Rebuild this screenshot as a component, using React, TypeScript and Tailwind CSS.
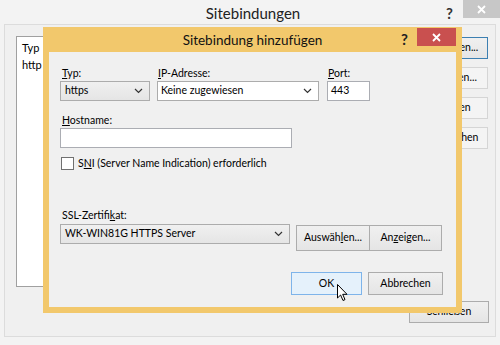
import React from 'react';

const font = "font-['Segoe_UI','Lato','Noto_Sans',sans-serif]";

function Chevron() {
  return (
    <svg width="9" height="6" viewBox="0 0 9 6" className="shrink-0">
      <path d="M1 1 L4.5 4.5 L8 1" fill="none" stroke="#333" strokeWidth="1.2" />
    </svg>
  );
}

function WinButton({ children, className = '' }: { children: React.ReactNode; className?: string }) {
  return (
    <div className={`flex items-center justify-center border border-[#acacac] bg-gradient-to-b from-[#f0f0f0] to-[#e5e5e5] text-[10.5px] text-black ${className}`}>
      {children}
    </div>
  );
}

export default function App() {
  return (
    <div className={`relative w-[500px] h-[345px] overflow-hidden bg-[#f3f3f3] text-black ${font}`}>
      {/* ── Background window: Sitebindungen ── */}
      <div className="flex flex-col h-full">
        <div className="relative h-[24px] shrink-0 flex items-center justify-center">
          <span className="text-[15px] text-[#222] pt-[2px] pl-[6px]">Sitebindungen</span>
          <span className="absolute left-[446px] top-[2px] text-[15px] font-bold text-[#333]">?</span>
          <div className="absolute right-0 top-0 w-[37px] h-[18px] bg-[#c7c7c7] flex items-center justify-center">
            <svg width="9" height="9" viewBox="0 0 9 9">
              <path d="M1 1 L8 8 M8 1 L1 8" stroke="#fff" strokeWidth="1.8" />
            </svg>
          </div>
        </div>
        <div className="mx-[4px] mb-[8px] flex-1 flex flex-col border border-[#dcdcdc] bg-[#f0f0f0] pl-[11px] pr-[7px] pt-[11px]">
          <div className="flex gap-[10px]">
            <div className="flex-1 h-[251px] bg-white border border-[#a0a0a0] text-[11px] pl-[5px] pt-[2px]">
              <div className="h-[17px] leading-[17px]">Typ</div>
              <div className="h-[17px] leading-[17px]">http</div>
            </div>
            <div className="w-[80px] flex flex-col gap-[8px] pt-[1px]">
              <WinButton className="h-[22px] !border-[#3c7fb1]">Hinzufügen...</WinButton>
              <WinButton className="h-[22px] text-[#a0a0a0] !border-[#d5d5d5] !from-[#f4f4f4] !to-[#f4f4f4]">Bearbeiten...</WinButton>
              <WinButton className="h-[22px] text-[#a0a0a0] !border-[#d5d5d5] !from-[#f4f4f4] !to-[#f4f4f4]">Entfernen</WinButton>
              <WinButton className="h-[22px] text-[#a0a0a0] !border-[#d5d5d5] !from-[#f4f4f4] !to-[#f4f4f4]">Durchsuchen</WinButton>
            </div>
          </div>
          <div className="flex justify-end mt-[14px]">
            <WinButton className="w-[80px] h-[22px] mr-[-1px]">Schließen</WinButton>
          </div>
        </div>
      </div>

      {/* ── Dialog: Sitebindung hinzufügen ── */}
      <div className="absolute left-[43px] top-[27px] w-[419px] h-[286px] bg-[#f2c86c] flex flex-col px-[6px] pb-[6px]">
        <div className="relative h-[25px] shrink-0 flex items-center justify-center">
          <span className="text-[13.5px] text-[#111] pt-[1px]">Sitebindung hinzufügen</span>
          <span className="absolute right-[48px] top-[1px] text-[15px] font-bold text-[#222]">?</span>
          <div className="absolute right-0 top-[1px] w-[39px] h-[18px] bg-[#c9504f] flex items-center justify-center">
            <svg width="9" height="9" viewBox="0 0 9 9">
              <path d="M1 1 L8 8 M8 1 L1 8" stroke="#fff" strokeWidth="1.8" />
            </svg>
          </div>
        </div>

        <div className="flex-1 bg-[#f0f0f0] pl-[11px] pr-[13px] pt-[13px] text-[10.5px] flex flex-col">
          {/* Typ / IP / Port */}
          <div className="flex items-start">
            <div className="flex flex-col w-[90px]">
              <div className="h-[16px] leading-[16px] pl-[2px]"><u>T</u>yp:</div>
              <div className="h-[20px] border border-[#acacac] bg-gradient-to-b from-[#f0f0f0] to-[#e5e5e5] flex items-center justify-between pl-[4px] pr-[6px]">
                <span>https</span>
                <Chevron />
              </div>
            </div>
            <div className="flex flex-col w-[162px] ml-[7px]">
              <div className="h-[16px] leading-[16px] pl-[1px]"><u>I</u>P-Adresse:</div>
              <div className="h-[20px] border border-[#acacac] bg-white flex items-center justify-between pl-[3px] pr-[6px]">
                <span>Keine zugewiesen</span>
                <Chevron />
              </div>
            </div>
            <div className="flex flex-col w-[43px] ml-[8px]">
              <div className="h-[16px] leading-[16px] pl-[1px]"><u>P</u>ort:</div>
              <div className="h-[20px] border border-[#abadb3] bg-white flex items-center pl-[3px]">443</div>
            </div>
          </div>

          {/* Hostname */}
          <div className="flex flex-col mt-[11px]">
            <div className="h-[16px] leading-[16px] pl-[2px]"><u>H</u>ostname:</div>
            <div className="w-[232px] h-[20px] border border-[#abadb3] bg-white" />
          </div>

          {/* SNI */}
          <div className="flex items-center mt-[9px] h-[13px]">
            <div className="w-[13px] h-[13px] ml-[1px] border border-[#707070] bg-white" />
            <span className="ml-[4px]">S<u>N</u>I (Server Name Indication) erforderlich</span>
          </div>

          {/* SSL */}
          <div className="flex flex-col mt-[37px]">
            <div className="h-[16px] leading-[16px] pl-[2px]">SSL-Zertifi<u>k</u>at:</div>
            <div className="flex items-start mt-[1px]">
              <div className="w-[230px] h-[20px] border border-[#acacac] bg-gradient-to-b from-[#f0f0f0] to-[#e5e5e5] flex items-center justify-between pl-[4px] pr-[6px]">
                <span>WK-WIN81G HTTPS Server</span>
                <Chevron />
              </div>
              <WinButton className="w-[74px] h-[26px] ml-[6px] mt-[1px]">Auswäh<u>l</u>en...</WinButton>
              <WinButton className="w-[73px] h-[26px] ml-[-1px] mt-[1px]">An<u>z</u>eigen...</WinButton>
            </div>
          </div>

          {/* OK / Abbrechen */}
          <div className="flex justify-end mt-[21px]">
            <div className="w-[71px] h-[23px] border border-[#7eb4ea] bg-[#e5f1fb] flex items-center justify-center text-[10.5px]">OK</div>
            <WinButton className="w-[75px] h-[23px] ml-[6px]">Abbrechen</WinButton>
          </div>
        </div>
      </div>

      {/* mouse cursor */}
      <svg className="absolute left-[337px] top-[284px]" width="12" height="18" viewBox="0 0 12 18">
        <path d="M0.5 0.5 L0.5 14 L3.6 11 L6 16.5 L8 15.6 L5.7 10.3 L10 10.3 Z" fill="#fff" stroke="#000" strokeWidth="1" strokeLinejoin="round" />
      </svg>
    </div>
  );
}
